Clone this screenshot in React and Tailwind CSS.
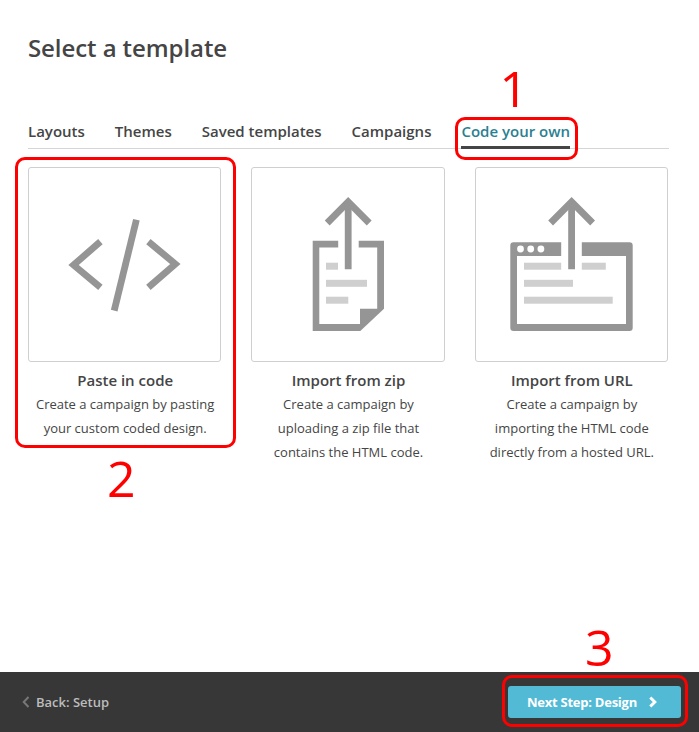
import React from "react";

const tabs = ["Layouts", "Themes", "Saved templates", "Campaigns"];

function Callout({ className }) {
  return <span className={`pointer-events-none absolute z-10 rounded-[10px] border-3 border-[#ff0000] ${className}`} />;
}

function StepNumber({ className, children }) {
  return (
    <span className={`pointer-events-none absolute z-10 text-[50px] leading-[50px] font-normal tracking-normal text-[#ff0000] ${className}`}>
      {children}
    </span>
  );
}

function UploadArrow() {
  return (
    <g fill="none" stroke="#959595" strokeWidth="6.8">
      <path d="M75.2 55 96.2 33.8 117.2 55" />
      <path d="M96.2 34V101.3" />
    </g>
  );
}

function CodeIcon() {
  return (
    <svg className="block h-[193px] w-[192px]" viewBox="0 0 192 193">
      <g fill="none" stroke="#959595" strokeWidth="6.8">
        <path d="M71.4 73.6 44.6 97 71.4 119.4" />
        <path d="M119.4 73.6 146.3 96 119.4 119.4" />
        <path d="M107.4 51.8 85.2 142.6" />
      </g>
    </svg>
  );
}

function ZipIcon() {
  return (
    <svg className="block h-[193px] w-[192px]" viewBox="0 0 192 193">
      <UploadArrow />
      <path
        fill="#959595"
        d="M60.7 72.7H86.2V79.4H67.3V156H108V140.7H125.2V79.4H106.7V72.7H132V140.7L108.3 163H60.7Z"
      />
      <g fill="#cfcfcf">
        <rect x="74" y="94.7" width="12" height="7" />
        <rect x="74" y="111.8" width="41" height="7" />
        <rect x="74" y="128.7" width="22.3" height="7" />
      </g>
    </svg>
  );
}

function UrlIcon() {
  return (
    <svg className="block h-[193px] w-[192px]" viewBox="0 0 192 193">
      <g transform="translate(-0.6 0)">
        <UploadArrow />
      </g>
      <path
        fill="#959595"
        d="M37.5 74.3H85.2V88H41V156H150V88H105.8V74.3H153.5Q156.7 74.3 156.7 77.5V159.8Q156.7 163 153.5 163H37.5Q34.3 163 34.3 159.8V77.5Q34.3 74.3 37.5 74.3Z"
      />
      <g fill="#ffffff">
        <circle cx="44.5" cy="81" r="3.4" />
        <circle cx="54.7" cy="81" r="3.4" />
        <circle cx="64.9" cy="81" r="3.4" />
      </g>
      <g fill="#cfcfcf">
        <rect x="48" y="94.7" width="37.2" height="7" />
        <rect x="105.8" y="94.7" width="24" height="7" />
        <rect x="48" y="111.8" width="49" height="7" />
        <rect x="48" y="128.7" width="88.7" height="7" />
      </g>
    </svg>
  );
}

function Card({ icon, title, lines, children }) {
  return (
    <article className="relative text-center">
      <div className="h-[195px] overflow-hidden rounded-[3px] border border-[#cfcfcf]">{icon}</div>
      <h2 className="mt-[6px] pl-px text-[15px] leading-6 font-semibold">{title}</h2>
      <p className="pl-px text-[13px] leading-6 whitespace-nowrap">
        {lines.map((line) => (
          <span key={line} className="block">
            {line}
          </span>
        ))}
      </p>
      {children}
    </article>
  );
}

export default function App() {
  return (
    <div className="flex h-[732px] w-[699px] flex-col overflow-hidden bg-white font-['Open_Sans',sans-serif] text-[#454545]">
      <main className="flex-1 pr-[30px] pl-7">
        <h1 className="pt-[30px] text-[24px] leading-9 font-semibold tracking-[-0.08px]">Select a template</h1>
        <nav className="mt-[50px] flex h-[33px] gap-[30px] border-b border-[#d5d5d5] text-[15px] leading-[31px] font-semibold">
          {tabs.map((tab) => (
            <a key={tab}>{tab}</a>
          ))}
          <a className="relative h-[33px] border-b-3 border-[#454545] text-[#2c7f92]">
            Code your own
            <Callout className="top-px -left-[6px] h-[43px] w-[123px]" />
            <StepNumber className="-top-[53px] left-[38px]">1</StepNumber>
          </a>
        </nav>
        <section className="mt-[18px] mr-px grid grid-cols-3 gap-[30px]">
          <Card icon={<CodeIcon />} title="Paste in code" lines={["Create a campaign by pasting", "your custom coded design."]}>
            <Callout className="-top-[10px] -left-[13px] h-[291px] w-[221px]" />
            <StepNumber className="top-[286px] left-[79px]">2</StepNumber>
          </Card>
          <Card
            icon={<ZipIcon />}
            title="Import from zip"
            lines={["Create a campaign by", "uploading a zip file that", "contains the HTML code."]}
          />
          <Card
            icon={<UrlIcon />}
            title="Import from URL"
            lines={["Create a campaign by", "importing the HTML code", "directly from a hosted URL."]}
          />
        </section>
      </main>
      <footer className="flex h-[60px] items-center justify-between bg-[#373737] pr-[18px] pl-[22px] text-[13px] font-semibold">
        <a className="flex items-center gap-[6px] text-[#bcbcbc]">
          <svg className="h-3 w-2" viewBox="0 0 8 12" fill="none" stroke="#777777" strokeWidth="2">
            <path d="M6.5 1 1.7 6 6.5 11" />
          </svg>
          <span className="pt-px">Back: Setup</span>
        </a>
        <button className="relative flex h-8 w-[173px] items-center rounded-[3px] bg-[#52bad5] pl-[19px] font-bold tracking-[-0.25px] text-white">
          <span className="pt-px">Next Step: Design</span>
          <svg className="ml-[12px] h-3 w-2" viewBox="0 0 8 12" fill="none" stroke="currentColor" strokeWidth="3">
            <path d="M1.3 1.5 5.8 6 1.3 10.5" />
          </svg>
          <Callout className="-top-[11px] -left-[6px] h-[52px] w-[186px]" />
          <StepNumber className="-top-[64px] left-[77px]">3</StepNumber>
        </button>
      </footer>
    </div>
  );
}
